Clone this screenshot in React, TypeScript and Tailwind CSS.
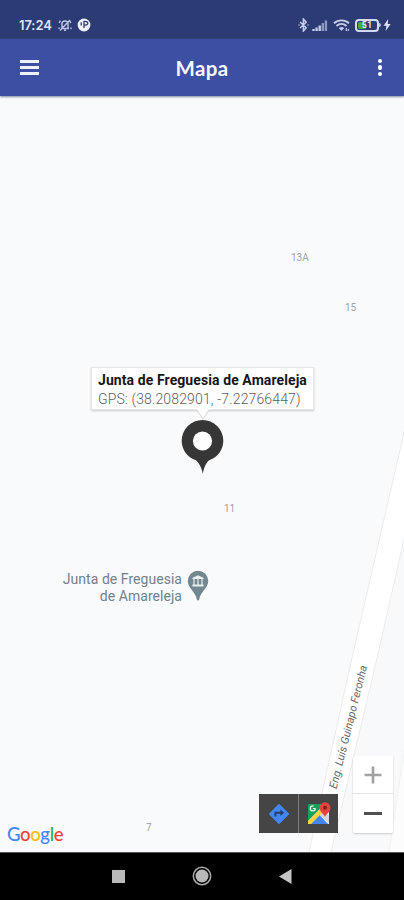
function StatusBar() {
  return (
    <div className="flex h-[39px] items-end justify-between bg-[#2c3b74] pr-[13px] pb-[7px] pl-[19px] text-[#dfe4f5]">
      <div className="flex items-center">
        <span className="w-[34px] font-['Inter',sans-serif] text-[13px] leading-[14px] font-semibold tracking-[-0.1px]">17:24</span>
        {/* muted bell */}
        <svg className="ml-[5px] h-[14px] w-[14px]" viewBox="0 0 14 14" fill="none" stroke="#b8c2e2" strokeWidth="1.5">
          <path d="M3 10.5h8M4 10V6a3 3 0 0 1 6 0v4M6 12.3h2M2 12.5L12 2M1.2 5l1.2-2.3M12.8 5l-1-2M12.6 9.5l.8 1.4M1.4 9.500l-.6 1.400" />
        </svg>
        <svg className="ml-[5px] h-[14px] w-[14px]" viewBox="0 0 14 14">
          <circle cx="7" cy="7" r="6.4" fill="#eef1fb" />
          <path d="M4.2 7.5V4.300M7 10V3.500c2.800-.3 4 .5 3.800 2-.2 1.400-1.600 1.800-3.800 1.700" fill="none" stroke="#2c3b74" strokeWidth="1.3" />
        </svg>
      </div>
      <div className="flex items-center">
        <svg className="h-[14px] w-[11px]" viewBox="0 0 11 14" fill="none" stroke="#c4cdea" strokeWidth="1.5">
          <path d="M2 4l6.2 5.8L5.4 13V1l2.8 3.2L2 10M.5 7h1M9.5 7h1" />
        </svg>
        <svg className="ml-[3px] h-[14px] w-[16px]" viewBox="0 0 16 14" strokeWidth="2.4">
          <path d="M1.5 13v-2M4.6 13v-3.5M7.7 13V7.5" stroke="#c4cdea" />
          <path d="M10.8 13V5M13.9 13V2.5" stroke="#8b97c2" />
        </svg>
        <svg className="ml-[5px] h-[14px] w-[17px]" viewBox="0 0 17 14" fill="none" stroke="#c4cdea" strokeWidth="1.9">
          <path d="M1 5.3C5 1.4 12 1.4 16 5.3M3.5 8c3-2.8 7-2.8 10 0" />
          <path d="M5.8 10.2c1.7-1.6 3.7-1.6 5.4 0L8.5 12.8z" fill="#c4cdea" stroke="none" />
          <path d="M13.300 10v3M15.3 11v2" strokeWidth="1.2" />
        </svg>
        <div className="relative ml-[5px] h-[13px] w-[24px] rounded-[4px] border-2 border-[#d3daee] p-px">
          <div className="h-full w-[8px] rounded-l-[2px] bg-[#43ad3c]" />
          <span className="absolute inset-0 text-center font-['Roboto',sans-serif] text-[9px] leading-[9px] font-bold">51</span>
        </div>
        <div className="h-[4px] w-[2px] rounded-r bg-[#b6c0df]" />
        <svg className="ml-[2px] h-[12px] w-[8px]" viewBox="0 0 8 12" fill="#dfe4f5">
          <path d="M5.2 0L.6 6.7h2.8L2.6 12 7.6 4.9H4.7z" />
        </svg>
      </div>
    </div>
  );
}

function AppBar() {
  return (
    <header className="relative z-10 grid h-[57px] grid-cols-[1fr_auto_1fr] items-center bg-[#3c4fa2] px-[20px] shadow-[0_1px_2px_#7d879f]">
      <button aria-label="Menu" className="flex w-[19px] flex-col gap-[3px]">
        <span className="h-[3px] bg-[#eef0fa]" />
        <span className="h-[3px] bg-[#eef0fa]" />
        <span className="h-[3px] bg-[#eef0fa]" />
      </button>
      <h1 className="font-['Lato',sans-serif] text-[20.5px] leading-[24px] font-bold tracking-[0.3px] text-[#f6f7fd]">Mapa</h1>
      <button aria-label="Mais" className="flex w-[9px] flex-col items-center gap-[2px] justify-self-end pl-px">
        <span className="h-[4.5px] w-[4.5px] rounded-full bg-white" />
        <span className="h-[4.5px] w-[4.5px] rounded-full bg-white" />
        <span className="h-[4.5px] w-[4.5px] rounded-full bg-white" />
      </button>
    </header>
  );
}

function Roads() {
  return (
    <svg className="absolute inset-0 h-full w-full" viewBox="0 96 404 756">
      <path d="M404 540L331 852H404z" fill="#f8f9fa" />
      <path d="M406 424L352 658L309 852H331L378 654L406 530z" fill="#fff" />
      <path d="M406 424L352 658L309 852M331 852L378 654L406 530" fill="none" stroke="#e9ebec" />
      <path d="M406 738L389 852H406z" fill="#fcfcfd" />
      <path d="M406 738L389 852" fill="none" stroke="#eff1f2" />
    </svg>
  );
}

const houseNumbers = [
  { label: '13A', pos: 'left-[291px] top-[155px]' },
  { label: '15', pos: 'left-[345px] top-[205px]' },
  { label: '11', pos: 'left-[224px] top-[406px]' },
  { label: '7', pos: 'left-[146px] top-[725px]' },
];

function InfoWindow() {
  return (
    <div className="absolute top-[271px] left-[91px] h-[43px] w-[223px] border border-[#e5e6e7] bg-white pt-[3px] pl-[6px] shadow-[0_1px_2px_#c9cbcc]">
      <p className="w-max text-[14px] leading-[18px] font-bold tracking-[0.09px] text-[#161616]">Junta de Freguesia de Amareleja</p>
      <p className="w-max text-[14px] leading-[20px] font-light tracking-[0.14px] text-[#606060]">GPS: (38.2082901, -7.22766447)</p>
      <svg className="absolute top-[41px] left-[103px] h-[12px] w-[16px]" viewBox="0 0 16 12">
        <path d="M2 0l6 10 6-10z" fill="#fff" />
        <path d="M2 1l6 9 6-9" fill="none" stroke="#d5d7d8" />
      </svg>
    </div>
  );
}

function MapButtons() {
  return (
    <>
      <div className="absolute top-[698px] left-[259px] flex h-[39px] w-[79px] gap-px bg-[#7d7d7d]">
        <button aria-label="Direções" className="flex w-[39px] items-center justify-center bg-[#454545]">
          <svg className="h-[22px] w-[22px]" viewBox="0 0 22 22">
            <path d="M11 1.2L20.8 11 11 20.8 1.2 11z" fill="#4286f5" stroke="#4286f5" strokeLinejoin="round" />
            <path d="M7.4 13.5v-3.7h6" fill="none" stroke="#263d6a" strokeWidth="1.9" />
            <path d="M12.4 6.5l3.8 3.3-3.8 3.3z" fill="#263d6a" />
          </svg>
        </button>
        <button aria-label="Google Maps" className="flex w-[39px] items-center justify-center bg-[#454545]">
          <svg className="h-[25px] w-[25px]" viewBox="0 0 25 25">
            <path d="M2 3h21v20H2z" fill="#e9eaed" />
            <path d="M2 3h17L2 20z" fill="#16a05a" />
            <path d="M2 20L17 5l3 4L5 23H2z" fill="#fdd23e" />
            <path d="M5 23l8.7-8.7L22 23z" fill="#4286f5" />
            <path d="M13.7 14.3L18 10l5 5v7z" fill="#d5d7dc" />
            <circle cx="6.8" cy="7.4" r="2.5" fill="none" stroke="#e6f5ec" strokeWidth="1.3" strokeDasharray="12.4 3.3" />
            <path d="M6.8 7.6h2.5" stroke="#e6f5ec" strokeWidth="1.2" />
            <path d="M19 16c-.5-3-5.500-4.600-5.500-9.200a5.500 5.500 0 0 1 11 0c0 4.600-5 6.200-5.500 9.200z" fill="#e5453a" />
            <circle cx="19" cy="6.7" r="2" fill="#7f211e" />
          </svg>
        </button>
      </div>
      <div className="absolute top-[660px] left-[353px] flex h-[77px] w-[40px] flex-col rounded-[2px] bg-white/95 shadow-[0_1px_2px_#c8cacc]">
        <button aria-label="Aproximar" className="flex h-[38px] items-center justify-center border-b border-[#e4e5e6]">
          <svg className="h-[18px] w-[18px]" viewBox="0 0 18 18" stroke="#a3a3a3" strokeWidth="2.7">
            <path d="M.5 9h17M9 .5v17" />
          </svg>
        </button>
        <button aria-label="Afastar" className="flex flex-1 items-center justify-center">
          <span className="h-[3px] w-[18px] bg-[#505050]" />
        </button>
      </div>
    </>
  );
}

function MapView() {
  return (
    <main className="relative h-[756px] overflow-hidden bg-[#f9fafc]">
      <Roads />
      {houseNumbers.map((n) => (
        <span key={n.label} className={`absolute ${n.pos} text-[10px] leading-[13px] text-[#a0a2a4]`}>
          {n.label}
        </span>
      ))}

      <span className="absolute top-[624px] left-[279px] w-[140px] rotate-[-76deg] text-center text-[11px] leading-[14px] whitespace-nowrap text-[#686868] italic">
        Eng. Luís Guinapo Feronha
      </span>

      <InfoWindow />
      <svg className="absolute top-[323px] left-[181px] h-[56px] w-[43px]" viewBox="0 0 43 56">
        <path d="M21.5 1a20.8 20.8 0 0 1 20.8 20.7c0 9.4-6 16.5-13.6 19.4C25.5 43 23 48 21.8 55 20.5 48 17.5 43 14.3 41.1 6.7 38.2.7 31.1.7 21.7A20.8 20.8 0 0 1 21.5 1z" fill="#363636" />
        <circle cx="21.5" cy="22" r="9.6" fill="#fff" />
      </svg>

      {/* place label */}
      <div className="absolute top-[475px] left-[52px] flex w-[157px] items-start justify-end gap-[5px]">
        <p className="text-right text-[14px] leading-[17px] tracking-[0.04px] whitespace-nowrap text-[#72818a]">
          Junta de Freguesia
          <br />
          de Amareleja
        </p>
        <svg className="-mt-px h-[31px] w-[22px]" viewBox="0 0 22 31">
          <path d="M11 .8a10.2 10.2 0 0 1 10.2 10.3c0 7.6-7.3 9.7-9 18.3-.3 1.5-2.1 1.5-2.4 0C8.100 20.8.8 18.700.8 11.100A10.2 10.2 0 0 1 11 .8z" fill="#728790" />
          <path d="M5.500 8.500L11 6l5.500 2.500zM6 15h10v1H6zM7 9v6M11 9v6M15 9v6" fill="#e9eff1" stroke="#e9eff1" strokeWidth="1.2" />
        </svg>
      </div>

      <div className="absolute top-[726px] left-[7px] font-['Lato',sans-serif] text-[18.5px] leading-[24px] font-medium tracking-[-0.35px]">
        <span className="text-[#4285f4]">G</span>
        <span className="text-[#ea4335]">o</span>
        <span className="text-[#fbbc05]">o</span>
        <span className="text-[#4285f4]">g</span>
        <span className="text-[#34a853]">l</span>
        <span className="text-[#ea4335]">e</span>
      </div>
      <MapButtons />
    </main>
  );
}

function NavigationBar() {
  return (
    <nav className="flex h-[48px] items-center border-t border-[#55575b] bg-black pb-px pl-[112px]">
      <div className="h-[13px] w-[13px] bg-[#b9b9b9]" />
      <svg className="ml-[67px] h-[20px] w-[20px]" viewBox="0 0 20 20" fill="none">
        <circle cx="10" cy="10" r="8.700" stroke="#a8a8a8" strokeWidth="1.500" />
        <circle cx="10" cy="10" r="6.500" fill="#b9b9b9" />
      </svg>
      <svg className="ml-[67px] h-[15px] w-[13px]" viewBox="0 0 13 15">
        <path d="M12.500 0v15L0 7.500z" fill="#c4c4c4" />
      </svg>
    </nav>
  );
}

export default function App() {
  return (
    <div className="flex h-[900px] w-[404px] flex-col overflow-hidden bg-black font-['Roboto',sans-serif]">
      <StatusBar />
      <AppBar />
      <MapView />
      <NavigationBar />
    </div>
  );
}
